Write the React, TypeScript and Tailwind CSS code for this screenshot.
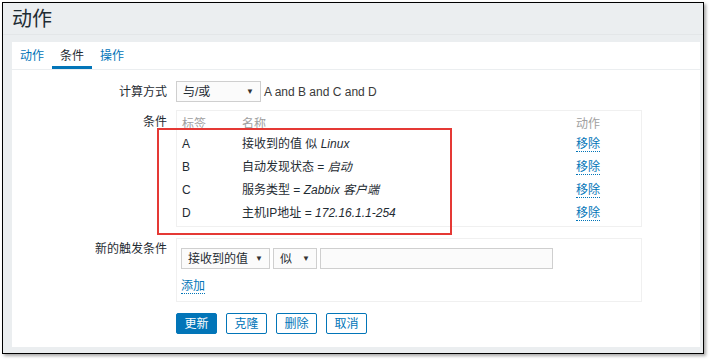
const font = { fontFamily: '"Liberation Sans", "Noto Sans CJK SC", sans-serif' };

const conditions = [
  { label: "A", name: "接收到的值 似", value: "Linux" },
  { label: "B", name: "自动发现状态 =", value: "启动" },
  { label: "C", name: "服务类型 =", value: "Zabbix 客户端" },
  { label: "D", name: "主机IP地址 =", value: "172.16.1.1-254" },
];

const Select = ({ text, className }: { text: string; className: string }) => (
  <div
    className={`flex items-center justify-between border border-[#cfcfcf] bg-[#fbfbfb] pl-[6px] pr-[6px] text-[12px] text-[#1f2c33] ${className}`}
  >
    <span>{text}</span>
    <span className="text-[8px] text-[#333]">▼</span>
  </div>
);

const Btn = ({ text, primary }: { text: string; primary?: boolean }) =>
  primary ? (
    <button className="h-[21px] w-[41px] rounded-[2px] border border-[#0275b8] bg-[#0275b8] text-[12px] text-white">
      {text}
    </button>
  ) : (
    <button className="h-[21px] w-[41px] rounded-[2px] border border-[#0275b8] bg-white text-[12px] text-[#0275b8]">
      {text}
    </button>
  );

export default function App() {
  return (
    <div className="relative h-[362px] w-[712px] bg-white" style={font}>
      <div className="ml-[2px] mt-[2px] flex h-[352px] w-[702px] flex-col border border-black bg-[#ebeef0] shadow-[2px_2px_3px_rgba(0,0,0,0.35)]">
        <div className="flex h-[32px] items-center border-b border-[#e3e6e8] pl-[9px] text-[20px] text-[#1f2c33]">
          动作
        </div>
        <div className="ml-[9px] mr-[3px] mt-[7px] flex h-[305px] flex-col bg-white">
          <div className="flex h-[28px] border-b border-[#ebeef0] text-[12px]">
            <div className="flex items-center px-[8px] text-[#0275b8]">动作</div>
            <div className="flex items-center border-b-[3px] border-[#0275b8] px-[8px] pt-[3px] text-[#1f2c33]">条件</div>
            <div className="flex items-center px-[8px] text-[#0275b8]">操作</div>
          </div>

          <div className="mt-[11px] flex items-center text-[12px] text-[#1f2c33]">
            <div className="w-[156px] pr-[1px] text-right">计算方式</div>
            <div className="ml-[8px] flex items-center">
              <Select text="与/或" className="h-[21px] w-[85px]" />
              <span className="ml-[3px] text-[#3a3a3a]">A and B and C and D</span>
            </div>
          </div>

          <div className="mt-[8px] flex text-[12px] text-[#1f2c33]">
            <div className="w-[156px] pr-[1px] pt-[3px] text-right">条件</div>
            <div className="ml-[8px] h-[117px] w-[466px] border border-[#f0f0f0] px-[5px] pt-[4px]">
              <div className="flex h-[17px] items-center text-[#a0a0a0]">
                <span className="w-[60px]">标签</span>
                <span className="flex-1">名称</span>
                <span className="w-[60px]">动作</span>
              </div>
              {conditions.map((c) => (
                <div key={c.label} className="flex h-[23px] items-center">
                  <span className="w-[60px]">{c.label}</span>
                  <span className="flex-1">
                    {c.name} <i>{c.value}</i>
                  </span>
                  <span className="w-[60px]">
                    <span className="border-b border-dotted border-[#0275b8] text-[#0275b8]">移除</span>
                  </span>
                </div>
              ))}
            </div>
          </div>

          <div className="mt-[11px] flex text-[12px] text-[#1f2c33]">
            <div className="w-[156px] pr-[1px] pt-[2px] text-right">新的触发条件</div>
            <div className="ml-[8px] h-[64px] w-[466px] border border-[#f0f0f0] px-[4px] pt-[9px]">
              <div className="flex items-center gap-[3px]">
                <Select text="接收到的值" className="h-[21px] w-[89px]" />
                <Select text="似" className="h-[21px] w-[44px]" />
                <div className="h-[21px] w-[233px] border border-[#cfcfcf] bg-[#fbfbfb]" />
              </div>
              <div className="mt-[8px]">
                <span className="border-b border-dotted border-[#0275b8] text-[#0275b8]">添加</span>
              </div>
            </div>
          </div>

          <div className="ml-[164px] mt-[11px] flex gap-[9px]">
            <Btn text="更新" primary />
            <Btn text="克隆" />
            <Btn text="删除" />
            <Btn text="取消" />
          </div>
        </div>
      </div>
      <div className="absolute left-[157px] top-[126px] h-[107px] w-[295px] border-2 border-[#e53935]" />
    </div>
  );
}
